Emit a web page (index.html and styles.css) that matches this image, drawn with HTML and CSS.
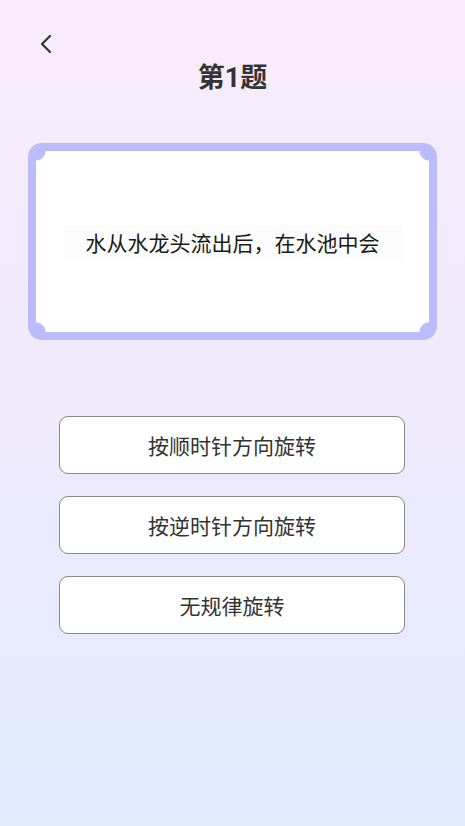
FILE: index.html
```html
<!DOCTYPE html>
<html lang="zh-CN">

<head>
    <meta charset="UTF-8">
    <meta name="viewport" content="width=device-width, initial-scale=1.0">
    <title>第1题</title>

    <link rel="stylesheet" href="styles.css">
</head>

<body>
    <header class="topo">
        <a class="voltar" href="#">
            <svg width="14" height="20" viewBox="0 0 14 20">
                <path d="M11 2 L3 10 L11 18" fill="none" stroke="#333" stroke-width="2.2" stroke-linecap="round" stroke-linejoin="round" />
            </svg>
        </a>
        <h1 class="titulo">第<b>1</b>题</h1>
    </header>

    <section class="cartao">
        <div class="cartaoInterno">
            <p class="pergunta">水从水龙头流出后，在水池中会</p>
        </div>
    </section>

    <section class="opcoes">
        <button class="opcao">按顺时针方向旋转</button>
        <button class="opcao">按逆时针方向旋转</button>
        <button class="opcao">无规律旋转</button>
    </section>
</body>

</html>
```

FILE: styles.css
```css
* {
    margin: 0;
    padding: 0;
    box-sizing: border-box;
    font-family: "Noto Sans CJK SC", "Noto Sans", sans-serif;
}

body {
    width: 465px;
    height: 826px;
    background: linear-gradient(180deg, #f9ecfb 0%, #efeafc 50%, #e0ebfc 100%);
    color: #333;
}

.topo {
    position: relative;
    height: 120px;
    padding-top: 34px;
}

.voltar {
    display: block;
    width: 14px;
    height: 20px;
    margin-left: 39px;
}

.voltar svg {
    display: block;
}

.titulo {
    margin-top: 4px;
    text-align: center;
    font-size: 27px;
    font-weight: 700;
    line-height: 36px;
    color: #333;
}

.titulo b {
    font-family: "Roboto", "Noto Sans", sans-serif;
    font-weight: 700;
}

.cartao {
    margin: 23px 28px 0;
    padding: 8px;
    background-color: #bcbcfc;
    border-radius: 14px;
}

.cartaoInterno {
    height: 181px;
    display: flex;
    align-items: center;
    justify-content: center;
    background:
        radial-gradient(circle at 0 0, #bcbcfc 9px, transparent 10px),
        radial-gradient(circle at 100% 0, #bcbcfc 9px, transparent 10px),
        radial-gradient(circle at 0 100%, #bcbcfc 9px, transparent 10px),
        radial-gradient(circle at 100% 100%, #bcbcfc 9px, transparent 10px),
        #fff;
}

.pergunta {
    width: 338px;
    height: 34px;
    line-height: 34px;
    text-align: center;
    font-size: 21px;
    color: #1a1a1a;
    background-color: #fcfcfc;
}

.opcoes {
    display: flex;
    flex-direction: column;
    gap: 22px;
    margin: 76px 60px 0 59px;
}

.opcao {
    height: 58px;
    border: 1px solid #8a8a8a;
    border-radius: 9px;
    background-color: #fff;
    font-size: 21px;
    color: #333;
    cursor: pointer;
}
```
